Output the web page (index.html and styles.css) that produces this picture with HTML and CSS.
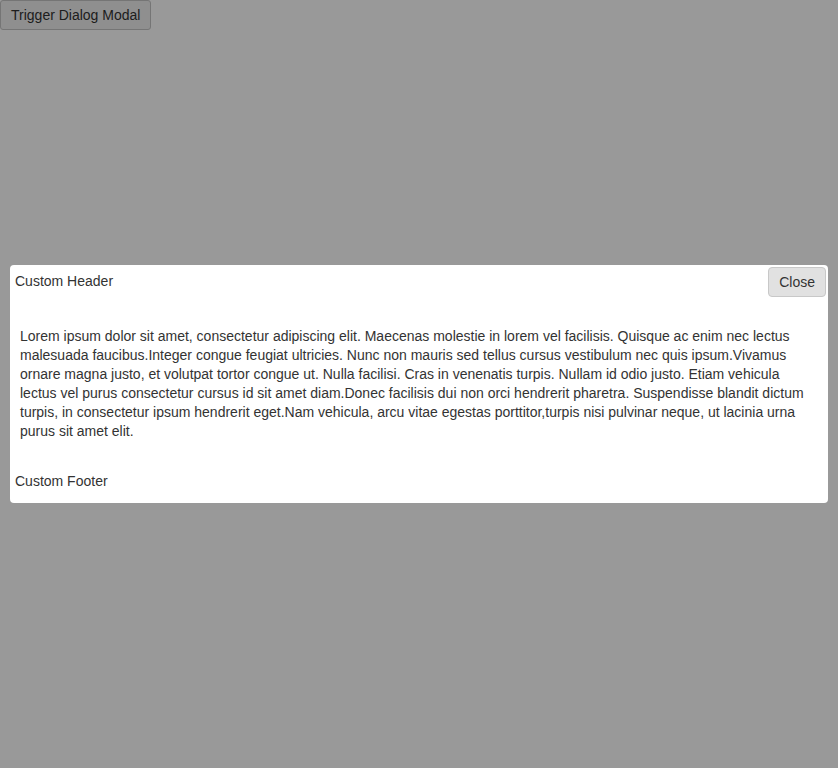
FILE: index.html
```html
<!DOCTYPE html>
<html>
<head>
<meta charset="utf-8">
<link rel="stylesheet" href="styles.css">
</head>
<body>
<button class="trigger">Trigger Dialog Modal</button>
<div class="overlay">
  <div class="modal">
    <div class="modal-header">
      <span class="title">Custom Header</span>
      <button class="close">Close</button>
    </div>
    <div class="modal-body">Lorem ipsum dolor sit amet, consectetur adipiscing elit. Maecenas molestie in lorem vel facilisis. Quisque ac enim nec lectus malesuada faucibus.Integer congue feugiat ultricies. Nunc non mauris sed tellus cursus vestibulum nec quis ipsum.Vivamus ornare magna justo, et volutpat tortor congue ut. Nulla facilisi. Cras in venenatis turpis. Nullam id odio justo. Etiam vehicula lectus vel purus consectetur cursus id sit amet diam.Donec facilisis dui non orci hendrerit pharetra. Suspendisse blandit dictum turpis, in consectetur ipsum hendrerit eget.Nam vehicula, arcu vitae egestas porttitor,turpis nisi pulvinar neque, ut lacinia urna purus sit amet elit.</div>
    <div class="modal-footer">Custom Footer</div>
  </div>
</div>
</body>
</html>
```
FILE: styles.css
```css
html, body {
  margin: 0;
  padding: 0;
  background: #fff;
  font-family: "Liberation Sans", Arial, sans-serif;
  font-size: 14px;
  color: #333;
}
.trigger {
  display: block;
  margin: 0;
  height: 30px;
  padding: 0 10px;
  font-family: "Liberation Sans", Arial, sans-serif;
  font-size: 14px;
  color: #333;
  background: #efefef;
  border: 1px solid #c4c4c4;
  border-radius: 3px;
}
.overlay {
  position: fixed;
  inset: 0;
  background: rgba(0, 0, 0, 0.4);
  display: flex;
  align-items: center;
  padding: 0 10px;
}
.modal {
  flex: 1;
  background: #fff;
  border-radius: 4px;
  height: 238px;
  box-sizing: border-box;
  display: flex;
  flex-direction: column;
}
.modal-header {
  display: flex;
  justify-content: space-between;
  align-items: flex-start;
  padding: 2px 2px 0 5px;
}
.title {
  line-height: 16px;
  margin-top: 6px;
}
.close {
  margin: 0;
  height: 30px;
  padding: 0 10px;
  font-family: "Liberation Sans", Arial, sans-serif;
  font-size: 14px;
  color: #333;
  background: #e1e1e1;
  border: 1px solid #c8c8c8;
  border-radius: 4px;
}
.modal-body {
  padding: 30px 10px 0 10px;
  line-height: 19px;
}
.modal-footer {
  margin-top: auto;
  padding: 0 5px 14px;
  line-height: 16px;
}
```
